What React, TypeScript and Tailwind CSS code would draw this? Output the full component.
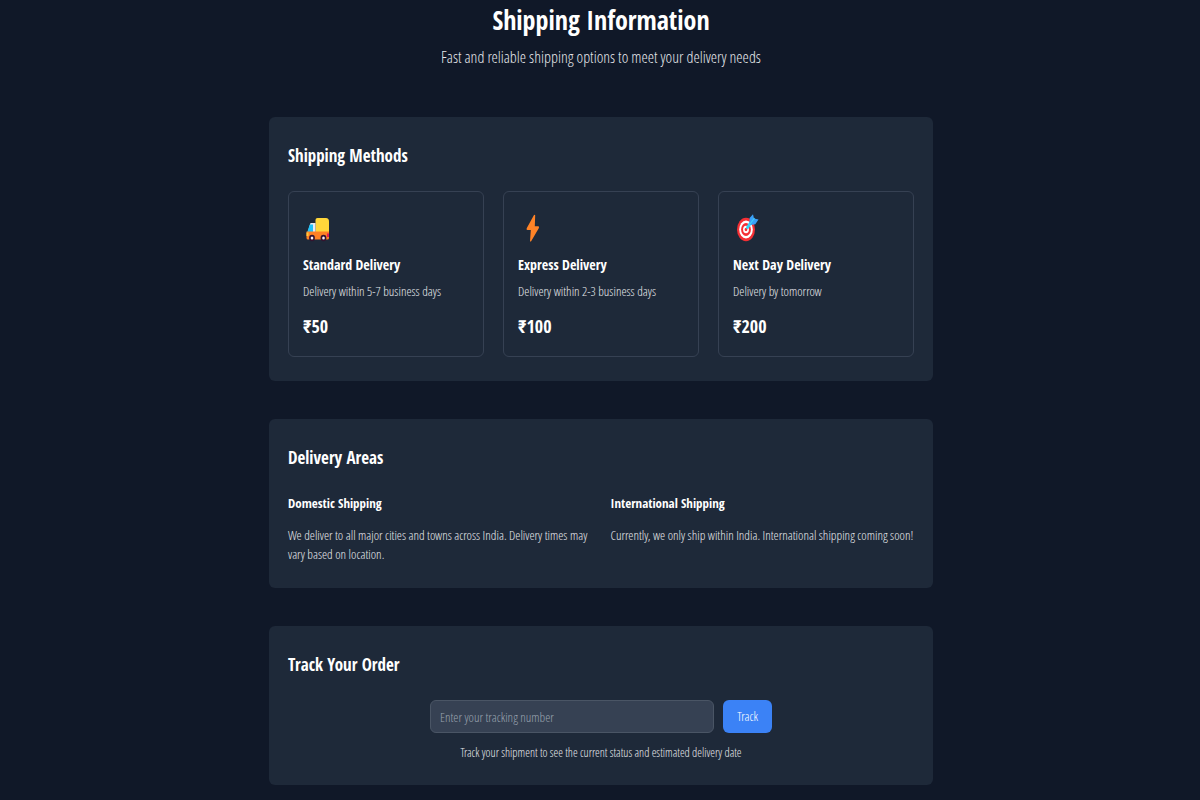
import type { ReactNode } from "react";

type Method = {
  name: string;
  detail: string;
  price: string;
  icon: ReactNode;
};

function TruckIcon() {
  return (
    <svg className="h-9 w-[30px]" viewBox="0 0 30 36" aria-hidden="true">
      <path d="M12.500 10q0-2 2-2h8.500q3 0 3 3.500V23H12.500z" fill="#ffd63a" />
      <path d="M7.500 13h5v9.500H4.500z" fill="#e8eaf2" />
      <path d="M6.800 14.500H10V22H4.300z" fill="#1fc3fb" />
      <path d="M3.500 21.500H26V28q0 1.500-1.500 1.500H5Q3.500 29.500 3.500 28z" fill="#ff8124" />
      <rect x="3.500" y="22.500" width="2" height="3.500" fill="#ffc93a" />
      <rect x="24" y="23.500" width="2" height="3.500" fill="#e21b52" />
      <ellipse cx="9" cy="28" rx="2.900" ry="3.300" fill="#35132e" />
      <ellipse cx="20.500" cy="28" rx="2.900" ry="3.300" fill="#35132e" />
      <ellipse cx="9" cy="28" rx="1.300" ry="1.500" fill="#f4f2f8" />
      <ellipse cx="20.500" cy="28" rx="1.300" ry="1.500" fill="#f4f2f8" />
    </svg>
  );
}

function BoltIcon() {
  return (
    <svg className="h-9 w-[30px]" viewBox="0 0 30 36" aria-hidden="true">
      <path
        d="M16 5 8.700 18.200q-.6 1.800.6 1.800h3.500L12 31.200q.5.900 1.300-.2L20.900 18q.6-1.700-.7-1.700h-3.400L17.200 5.200q-.6-1-1.200-.2z"
        fill="#ff8327"
      />
    </svg>
  );
}

function TargetIcon() {
  return (
    <svg className="h-9 w-[30px]" viewBox="0 0 30 36" aria-hidden="true">
      <ellipse cx="13" cy="19.500" rx="9" ry="11.800" fill="#f52f34" />
      <ellipse cx="13" cy="19.500" rx="6.800" ry="9" fill="#fff" />
      <ellipse cx="13" cy="19.500" rx="4.900" ry="6.400" fill="#f52f34" />
      <ellipse cx="13" cy="19.500" rx="2.900" ry="3.800" fill="#fff" />
      <ellipse cx="13" cy="19.500" rx="1.300" ry="1.700" fill="#f52f34" />
      <path d="m14.500 17.500 4-6" stroke="#35d5f5" strokeWidth="3" strokeLinecap="round" />
      <path d="M16.500 13.500 16.600 8 20 4.300l1 4.200 4.500 1-3.200 4.700-4.500.8z" fill="#3aa0f8" />
      <path d="m15.500 16 6-8" stroke="#43cdf8" strokeWidth="1.200" />
    </svg>
  );
}

const methods: Method[] = [
  {
    name: "Standard Delivery",
    detail: "Delivery within 5-7 business days",
    price: "₹50",
    icon: <TruckIcon />,
  },
  {
    name: "Express Delivery",
    detail: "Delivery within 2-3 business days",
    price: "₹100",
    icon: <BoltIcon />,
  },
  {
    name: "Next Day Delivery",
    detail: "Delivery by tomorrow",
    price: "₹200",
    icon: <TargetIcon />,
  },
];

const areas = [
  {
    title: "Domestic Shipping",
    text: "We deliver to all major cities and towns across India. Delivery times may vary based on location.",
  },
  {
    title: "International Shipping",
    text: "Currently, we only ship within India. International shipping coming soon!",
  },
];

const strong = "font-['Open_Sans_Condensed','Roboto_Condensed','Noto_Sans',sans-serif] font-bold text-white";

function Panel({ title, children }: { title: string; children: ReactNode }) {
  return (
    <section className="rounded-md bg-gray-800 px-[19px] pt-[25px] pb-6">
      <h2 className={`mb-[21px] text-[17px] leading-7 ${strong}`}>{title}</h2>
      {children}
    </section>
  );
}

export default function App() {
  return (
    <div className="min-h-screen bg-gray-900 pb-4 pl-[2px] font-['Open_Sans_Condensed_Light','Roboto_Condensed','Noto_Sans',sans-serif] text-gray-200">
      <header className="text-center">
        <h1 className={`text-[26px] leading-10 ${strong}`}>Shipping Information</h1>
        <p className="mt-1 text-[16px] leading-[26px]">
          Fast and reliable shipping options to meet your delivery needs
        </p>
      </header>

      <main className="mx-auto mt-[47px] flex max-w-[664px] flex-col gap-[38px]">
        <Panel title="Shipping Methods">
          <div className="grid gap-[19px] sm:grid-cols-3">
            {methods.map((method) => (
              <article key={method.name} className="rounded-md border border-gray-700 px-[14px] py-[18px]">
                {method.icon}
                <h3 className={`mt-[7px] text-[14px] leading-6 ${strong}`}>{method.name}</h3>
                <p className="mt-1 text-[13px] leading-5">{method.detail}</p>
                <p className={`mt-[13px] text-[18px] leading-6 ${strong}`}>{method.price}</p>
              </article>
            ))}
          </div>
        </Panel>

        <Panel title="Delivery Areas">
          <div className="grid gap-[19px] sm:grid-cols-2">
            {areas.map((area) => (
              <div key={area.title}>
                <h3 className={`mb-3 text-[13px] leading-[21px] ${strong}`}>{area.title}</h3>
                <p className="text-[13px] leading-[19px]">{area.text}</p>
              </div>
            ))}
          </div>
        </Panel>

        <Panel title="Track Your Order">
          <form className="mx-auto max-w-[342px]" onSubmit={(event) => event.preventDefault()}>
            <div className="flex gap-[9px]">
              <input
                type="text"
                aria-label="Tracking number"
                placeholder="Enter your tracking number"
                className="h-[33px] min-w-0 flex-1 rounded-md border border-gray-600 bg-gray-700 px-[9px] text-[13px] text-white placeholder:text-gray-400"
              />
              <button type="submit" className="h-[33px] rounded-md bg-[#3b82f6] px-[14px] text-[13px] text-white">
                Track
              </button>
            </div>
            <p className="mt-3 text-center text-[12px] leading-4">
              Track your shipment to see the current status and estimated delivery date
            </p>
          </form>
        </Panel>
      </main>
    </div>
  );
}
